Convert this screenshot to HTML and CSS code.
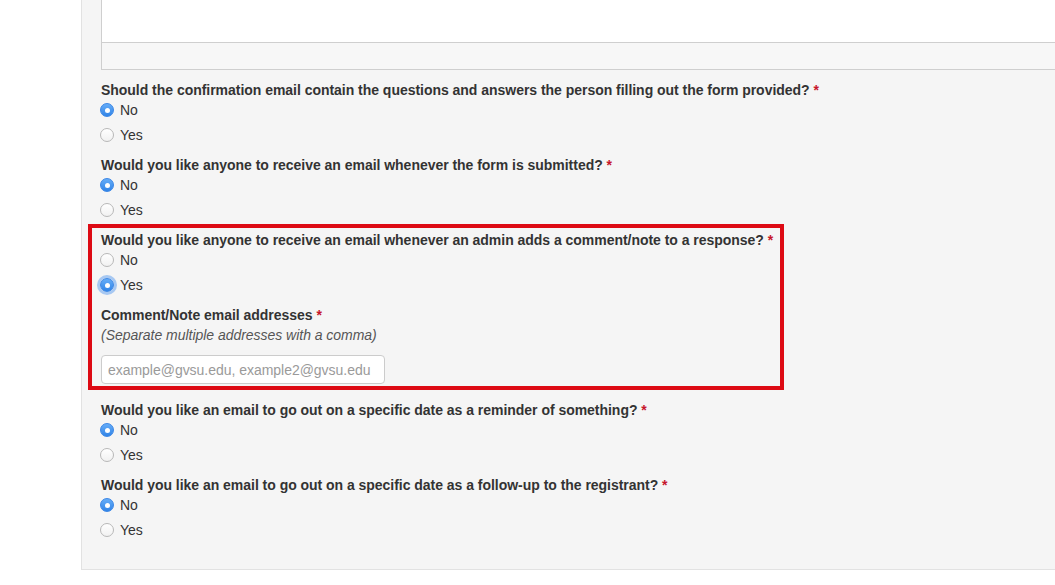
FILE: index.html
```html
<!DOCTYPE html>
<html>
<head>
<meta charset="utf-8">
<link rel="stylesheet" href="styles.css">
</head>
<body>
<div class="form-panel">
  <div class="editor">
    <div class="editor-body"></div>
    <div class="editor-status"></div>
  </div>

  <div class="group">
    <div class="q">Should the confirmation email contain the questions and answers the person filling out the form provided? <span class="req">*</span></div>
    <div class="opt"><span class="radio checked"></span>No</div>
    <div class="opt"><span class="radio"></span>Yes</div>
  </div>

  <div class="group">
    <div class="q">Would you like anyone to receive an email whenever the form is submitted? <span class="req">*</span></div>
    <div class="opt"><span class="radio checked"></span>No</div>
    <div class="opt"><span class="radio"></span>Yes</div>
  </div>

  <div class="highlight">
    <div class="q">Would you like anyone to receive an email whenever an admin adds a comment/note to a response? <span class="req">*</span></div>
    <div class="opt"><span class="radio"></span>No</div>
    <div class="opt"><span class="radio checked focus"></span>Yes</div>
    <div class="q field-label">Comment/Note email addresses <span class="req">*</span></div>
    <div class="help">(Separate multiple addresses with a comma)</div>
    <input class="text-input" type="text" placeholder="example@gvsu.edu, example2@gvsu.edu">
  </div>

  <div class="group">
    <div class="q">Would you like an email to go out on a specific date as a reminder of something? <span class="req">*</span></div>
    <div class="opt"><span class="radio checked"></span>No</div>
    <div class="opt"><span class="radio"></span>Yes</div>
  </div>

  <div class="group">
    <div class="q">Would you like an email to go out on a specific date as a follow-up to the registrant? <span class="req">*</span></div>
    <div class="opt"><span class="radio checked"></span>No</div>
    <div class="opt"><span class="radio"></span>Yes</div>
  </div>
</div>
</body>
</html>
```
FILE: styles.css
```css
html, body {
  margin: 0;
  padding: 0;
  overflow: hidden;
  background: #ffffff;
}
body {
  font-family: "Liberation Sans", Arial, Helvetica, sans-serif;
  font-size: 14px;
  color: #333333;
  letter-spacing: -0.03px;
}
.form-panel {
  margin-left: 81px;
  border-left: 1px solid #e2e2e2;
  border-bottom: 1px solid #e2e2e2;
  background: #f5f5f5;
  padding: 0 0 29px 19px;
}
.editor {
  border-left: 1px solid #cfcfcf;
  border-bottom: 1px solid #cfcfcf;
  margin-right: -20px;
}
.editor-body {
  height: 42px;
  background: #ffffff;
  border-bottom: 1px solid #cfcfcf;
}
.editor-status {
  height: 26px;
  background: #f7f7f7;
}
.group {
  margin-top: 10px;
}
.q {
  font-weight: bold;
  line-height: 20px;
  white-space: nowrap;
}
.req {
  color: #c7162b;
}
.opt {
  display: flex;
  align-items: center;
  height: 20px;
  line-height: 20px;
  margin-top: 5px;
}
.q + .opt {
  margin-top: 0;
}
.radio {
  box-sizing: border-box;
  width: 14px;
  height: 14px;
  border-radius: 50%;
  border: 1px solid #b8b8b8;
  background: linear-gradient(#ffffff, #f1f1f1);
  margin-left: -1px;
  margin-right: 6px;
  flex: none;
  position: relative;
}
.radio.checked {
  border-color: #3a86e6;
  background: linear-gradient(#66adf8, #3184e7);
}
.radio.checked::after {
  content: "";
  position: absolute;
  left: 50%;
  top: 50%;
  width: 5px;
  height: 5px;
  margin: -2.5px 0 0 -2.5px;
  border-radius: 50%;
  background: #ffffff;
}
.radio.focus {
  box-shadow: 0 0 0 3px rgba(90, 155, 240, 0.5);
}
.highlight {
  box-sizing: border-box;
  width: 696px;
  margin: 4px 0 0 -13px;
  border: 4px solid #dd0a14;
  padding: 2px 0 2px 9px;
}
.field-label {
  margin-top: 10px;
}
.help {
  font-style: italic;
  color: #555555;
  line-height: 20px;
}
.text-input {
  display: block;
  box-sizing: border-box;
  margin: 10px 0 0 0;
  width: 284px;
  height: 29px;
  border: 1px solid #cccccc;
  border-radius: 4px;
  background: #ffffff;
  padding: 0 6px;
  font-family: "Liberation Sans", Arial, Helvetica, sans-serif;
  font-size: 14px;
  letter-spacing: -0.03px;
  color: #333333;
  outline: none;
}
.text-input::placeholder {
  color: #9a9a9a;
}
```
